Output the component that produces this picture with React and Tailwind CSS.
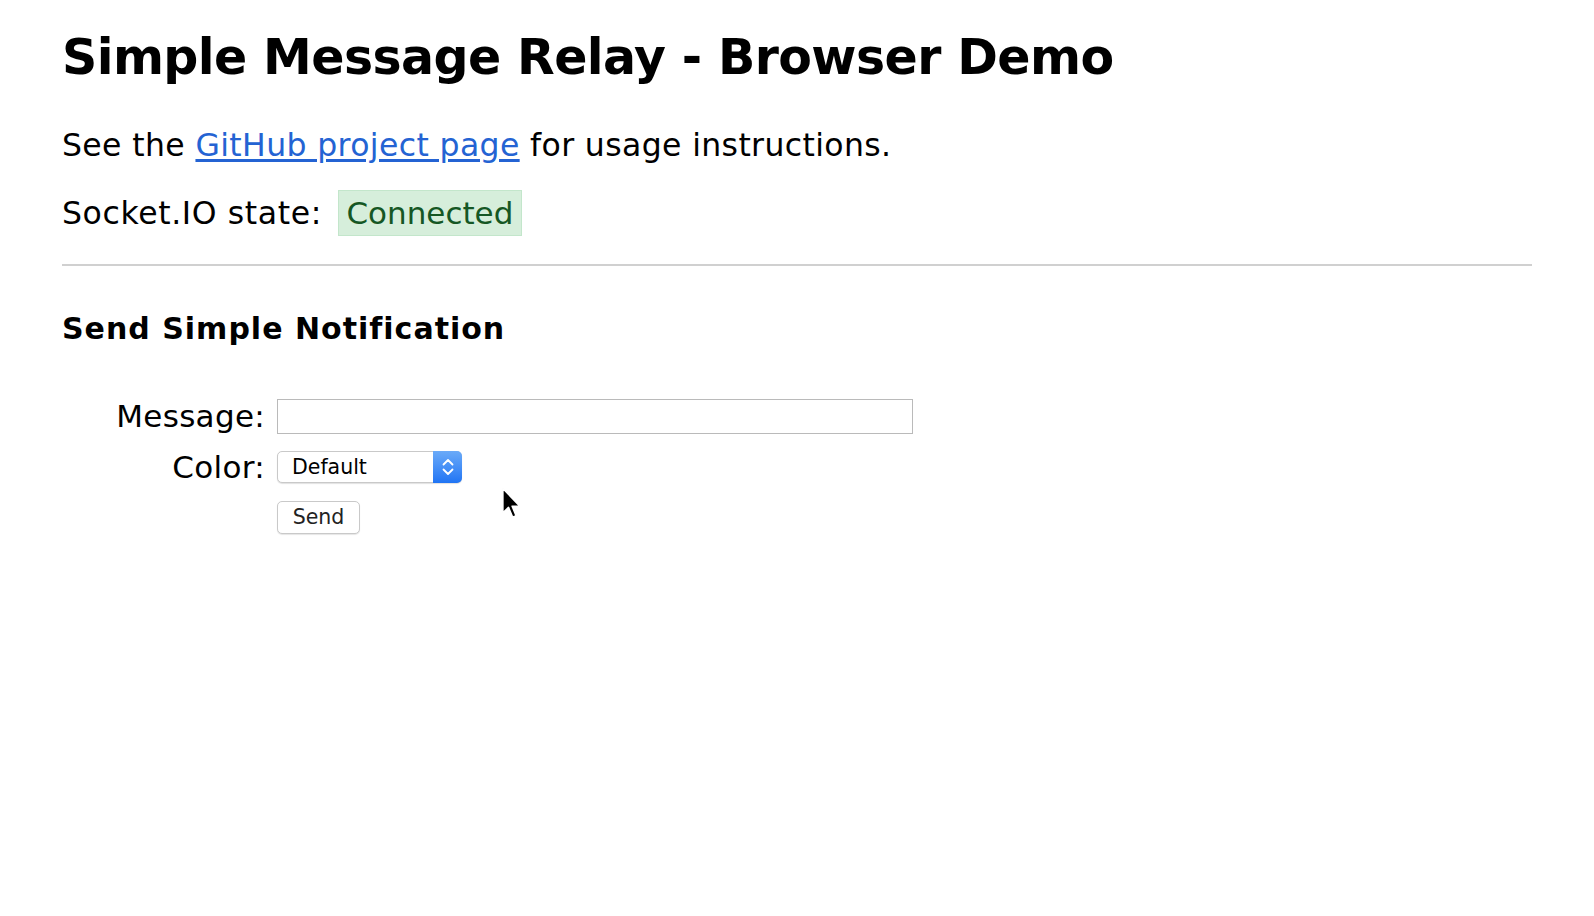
import React from 'react';

const Cursor = () => (
  <svg
    className="absolute left-[501px] top-[487px]"
    width="21"
    height="33"
    viewBox="0 0 13 21"
  >
    <path
      d="M1 1 L1 16.5 L4.6 13 L7.2 19.2 L9.4 18.2 L6.9 12.2 L11.8 12.2 Z"
      fill="#000"
      stroke="#fff"
      strokeWidth="1"
      strokeLinejoin="round"
    />
  </svg>
);

const App = () => {
  return (
    <div className="relative min-h-screen bg-white px-[62px] pt-[28px] font-['DejaVu_Sans',sans-serif] text-black">
      <h1 className="text-[49px] font-bold leading-[59px] tracking-[-0.6px]">Simple Message Relay - Browser Demo</h1>

      <p className="mt-[38px] text-[31.5px] leading-[40px] tracking-[0.37px]">
        See the{' '}
        <a href="#" className="text-[#2463d3] underline underline-offset-[3px]">
          GitHub project page
        </a>{' '}
        for usage instructions.
      </p>

      <div className="mt-[25px] flex h-[46px] items-center text-[31.5px] leading-[46px]">
        <span className="tracking-[0.62px]">Socket.IO state:</span>
        <span className="ml-[16px] flex h-[46px] w-[184px] items-center justify-center border border-[#c3e6cb] bg-[#d6eedb] text-[31px] text-[#155724]">
          Connected
        </span>
      </div>

      <hr className="mt-[28px] border-t-2 border-[#d0d0d0]" />

      <h3 className="mt-[45px] text-[30px] font-bold leading-[36px] tracking-[1px]">Send Simple Notification</h3>

      <form className="mt-[52px] flex flex-col" onSubmit={(e) => e.preventDefault()}>
        {/* Message */}
        <div className="flex items-center">
          <label className="w-[203px] text-right text-[31px] leading-[35px] tracking-[0.3px]">Message:</label>
          <input
            type="text"
            className="ml-[12px] h-[35px] w-[636px] border border-[#bababa] bg-white px-2 text-[20px] outline-none"
          />
        </div>

        {/* Color */}
        <div className="mt-[17px] flex items-center">
          <label className="w-[203px] text-right text-[31px] leading-[32px] tracking-[0.3px]">Color:</label>
          <div className="relative ml-[12px] h-[32px] w-[185px]">
            <select className="h-full w-full appearance-none rounded-[5px] border border-[#c9c9c9] bg-white pl-[14px] text-[20.5px] leading-[30px] shadow-[0_1px_1px_rgba(0,0,0,0.12)] outline-none">
              <option>Default</option>
              <option>Red</option>
              <option>Green</option>
              <option>Blue</option>
            </select>
            <span className="pointer-events-none absolute right-0 top-0 flex h-[32px] w-[29px] items-center justify-center rounded-r-[5px] bg-gradient-to-b from-[#6aaaf8] to-[#1f74f4]">
              <svg width="14" height="22" viewBox="0 0 14 22" fill="none" stroke="#fff" strokeWidth="1.8" strokeLinecap="round" strokeLinejoin="round">
                <path d="M2.5 8.5 L7 4 L11.5 8.5" />
                <path d="M2.5 13.5 L7 18 L11.5 13.5" />
              </svg>
            </span>
          </div>
        </div>

        {/* Send */}
        <div className="mt-[18px] flex items-center">
          <div className="w-[203px]" />
          <button
            type="submit"
            className="ml-[12px] h-[33px] w-[83px] rounded-[5px] border border-[#c9c9c9] bg-white text-[20.5px] leading-[31px] text-[#222] shadow-[0_1px_1px_rgba(0,0,0,0.1)]"
          >
            Send
          </button>
        </div>
      </form>

      <Cursor />
    </div>
  );
};

export default App;
